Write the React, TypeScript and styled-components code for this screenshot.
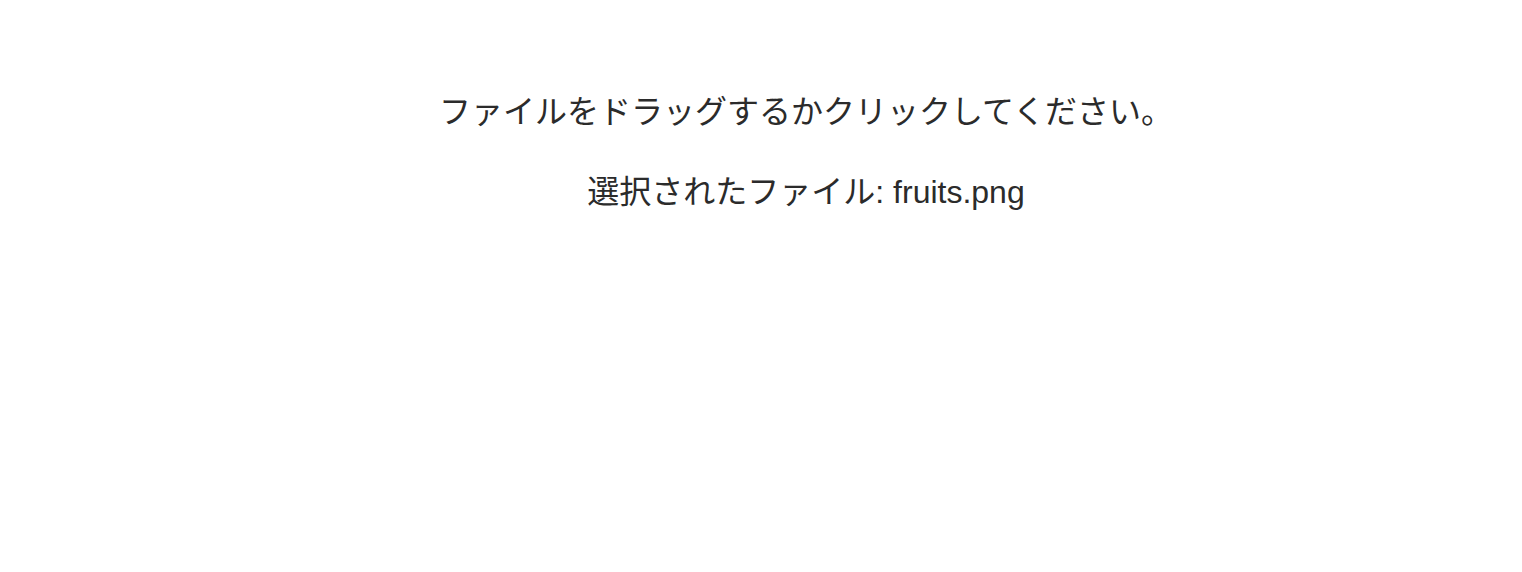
import React from "react";
import styled, { createGlobalStyle } from "styled-components";

const GlobalStyle = createGlobalStyle`
  html, body {
    margin: 0;
    padding: 0;
    background: #ffffff;
  }

  body {
    font-family: "Liberation Sans", "Noto Sans CJK JP", sans-serif;
    color: #2b2b2b;
  }
`;

const Page = styled.div`
  display: flex;
  justify-content: center;
  padding: 88px 0 0 90px;
`;

const Dropzone = styled.div`
  display: flex;
  flex-direction: column;
  align-items: center;
  gap: 32px;
  cursor: pointer;
`;

const Message = styled.p`
  margin: 0;
  font-size: 32px;
  line-height: 48px;
  text-align: center;
`;

export default function App() {
  const fileName = "fruits.png";

  return (
    <>
      <GlobalStyle />
      <Page>
        <Dropzone>
          <Message>ファイルをドラッグするかクリックしてください。</Message>
          <Message>選択されたファイル: {fileName}</Message>
        </Dropzone>
      </Page>
    </>
  );
}
